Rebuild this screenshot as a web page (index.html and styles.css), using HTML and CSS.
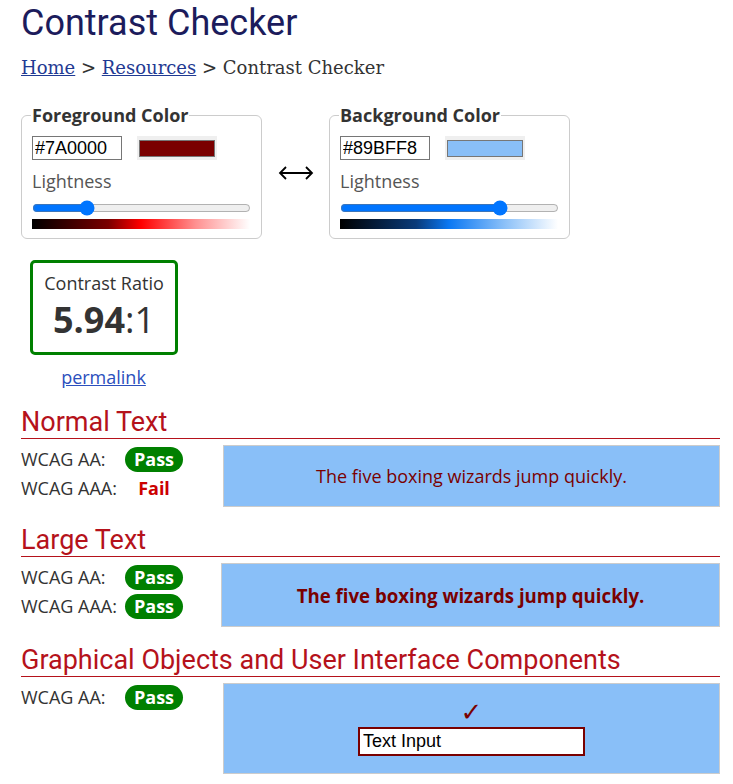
FILE: index.html
```html
<!DOCTYPE html>
<html lang="en">
<head>
<meta charset="utf-8">
<title>Contrast Checker</title>
<link rel="stylesheet" href="styles.css">
</head>
<body>
<main class="page">
  <h1 class="title">Contrast Checker</h1>
  <nav class="crumbs"><a href="#">Home</a> &gt; <a href="#">Resources</a> &gt; Contrast Checker</nav>

  <div class="colors">
    <fieldset class="picker">
      <legend>Foreground Color</legend>
      <div class="hexrow">
        <input class="hex" type="text" value="#7A0000">
        <span class="swatch"><span class="swatch-fill fg"></span></span>
      </div>
      <div class="light-label">Lightness</div>
      <input class="range" type="range" min="0" max="100" value="23">
      <div class="grad grad-fg"></div>
    </fieldset>
    <div class="swap">
      <svg class="swap-icon" width="36" height="16" viewBox="0 0 36 16" aria-hidden="true">
        <path d="M2 8 H34 M8 2 L2 8 L8 14 M28 2 L34 8 L28 14" fill="none" stroke="#000" stroke-width="1.8" stroke-linejoin="miter"/>
      </svg>
    </div>
    <fieldset class="picker">
      <legend>Background Color</legend>
      <div class="hexrow">
        <input class="hex" type="text" value="#89BFF8">
        <span class="swatch"><span class="swatch-fill bg"></span></span>
      </div>
      <div class="light-label">Lightness</div>
      <input class="range" type="range" min="0" max="100" value="75">
      <div class="grad grad-bg"></div>
    </fieldset>
  </div>

  <div class="ratio-wrap">
    <div class="ratio">
      <div class="ratio-label">Contrast Ratio</div>
      <div class="ratio-value"><b>5.94</b>:1</div>
    </div>
    <a class="permalink" href="#">permalink</a>
  </div>

  <section class="result result-first">
    <h2>Normal Text</h2>
    <div class="result-body">
      <div class="checks">
        <div class="check"><span class="lbl">WCAG AA:</span><span class="badge pass">Pass</span></div>
        <div class="check"><span class="lbl">WCAG AAA:</span><span class="badge fail">Fail</span></div>
      </div>
      <div class="sample normal">The five boxing wizards jump quickly.</div>
    </div>
  </section>

  <section class="result">
    <h2>Large Text</h2>
    <div class="result-body">
      <div class="checks">
        <div class="check"><span class="lbl">WCAG AA:</span><span class="badge pass">Pass</span></div>
        <div class="check"><span class="lbl">WCAG AAA:</span><span class="badge pass">Pass</span></div>
      </div>
      <div class="sample large">The five boxing wizards jump quickly.</div>
    </div>
  </section>

  <section class="result">
    <h2>Graphical Objects and User Interface Components</h2>
    <div class="result-body">
      <div class="checks">
        <div class="check"><span class="lbl">WCAG AA:</span><span class="badge pass">Pass</span></div>
      </div>
      <div class="sample graphic">
        <span class="tick">&#10003;</span>
        <input class="demo-input" type="text" value="Text Input">
      </div>
    </div>
  </section>
</main>
</body>
</html>
```
FILE: styles.css
```css
html, body { margin: 0; padding: 0; background: #fff; }
body { font-family: "Open Sans", sans-serif; color: #333; font-size: 18px; }
.page { padding: 0 13px 0 21px; }

.title {
  font-family: Roboto, sans-serif;
  font-weight: 400;
  font-size: 36px;
  color: #1c1c5c;
  margin: 0;
  padding-top: 2px;
  line-height: 42px;
}
.crumbs {
  font-family: "DejaVu Serif", serif;
  font-size: 18px;
  color: #333;
  margin-top: 12px;
  line-height: 24px;
}
.crumbs a { color: #1f3a93; }

.colors { display: flex; align-items: center; margin-top: 23px; }
.picker {
  width: 241px;
  box-sizing: border-box;
  margin: 0;
  border: 1px solid #ccc;
  border-radius: 6px;
  padding: 9px 10px 9px 10px;
}
.picker legend {
  font-weight: 700;
  font-size: 18px;
  padding: 0 1px;
  margin-left: -1px;
  line-height: 24px;
}
.swap { width: 67px; display: flex; justify-content: center; padding-top: 4px; }
.swap-icon { display: block; }
.hexrow { display: flex; align-items: center; gap: 15px; }
.hex {
  width: 90px; height: 24px; box-sizing: border-box;
  border: 1px solid #767676; padding: 0 2px;
  font-family: "Liberation Sans", sans-serif; font-size: 18px; color: #000;
  margin: 0;
}
.swatch { display: inline-block; width: 80px; height: 24px; background: #efefef; box-sizing: border-box; padding: 4px 2px 3px 2px; }
.swatch-fill { display: block; height: 100%; box-sizing: border-box; border: 1px solid #777; }
.swatch-fill.fg { background: #7A0000; }
.swatch-fill.bg { background: #89BFF8; }
.light-label { color: #555; margin-top: 9px; line-height: 25px; }
.range { display: block; width: 219px; margin: 6px 0 0 0; height: 16px; accent-color: #0075ff; }
.grad { width: 218px; height: 10px; margin-top: 3px; }
.grad-fg { background: linear-gradient(to right, #000 0%, #7a0000 35%, #ff0000 50%, #ff9090 75%, #fff 100%); }
.grad-bg { background: linear-gradient(to right, #000 0%, #0a3b7a 35%, #0b78f3 50%, #89bff8 75%, #fff 100%); }

.ratio-wrap { width: 165px; text-align: center; margin-top: 21px; }
.ratio {
  margin-left: 9px;
  width: 148px; height: 95px; box-sizing: border-box;
  border: 3px solid #008000; border-radius: 5px;
  padding-top: 8px;
}
.ratio-label { line-height: 25px; }
.ratio-value { font-size: 36px; line-height: 48px; }
.ratio-value b { font-weight: 700; }
.permalink { display: inline-block; margin-top: 10px; margin-left: 0; color: #2b4fbd; line-height: 25px; }

.result { margin-top: 17px; }
.result-first { margin-top: 16px; }
.result h2 {
  font-family: Roboto, sans-serif; font-weight: 400; font-size: 27px;
  color: #b5121b; margin: 0; line-height: 32px;
  border-bottom: 1px solid #b5121b;
  padding-bottom: 0;
}
.result-body { display: flex; margin-top: 6px; }
.checks { width: 202px; flex: none; }
.check { display: flex; align-items: center; height: 29px; }
.check + .check { height: 28px; }
.lbl { width: 104px; flex: none; line-height: 25px; }
.badge { display: inline-block; min-width: 58px; text-align: center; font-weight: 700; line-height: 25px; border-radius: 13px; }
.badge.pass { background: #008000; color: #fff; }
.badge.fail { color: #c00; }
.sample {
  flex: 1; box-sizing: border-box; border: 1px solid #ccc;
  background: #89BFF8; color: #7A0000;
  display: flex; align-items: center; justify-content: center;
}
.sample.normal { height: 62px; }
.sample.large { height: 64px; font-size: 18.67px; font-weight: 700; margin-left: -2px; }
.sample.graphic { height: 91px; flex-direction: column; justify-content: flex-start; padding-top: 14px; }
.tick { font-family: "DejaVu Sans", sans-serif; font-size: 26px; line-height: 29px; color: #7A0000; }
.demo-input {
  width: 227px; height: 29px; box-sizing: border-box; margin: 0;
  border: 2px solid #7A0000; background: #fff; padding: 0 3px;
  font-family: "Liberation Sans", sans-serif; font-size: 18px; color: #000;
}
```
